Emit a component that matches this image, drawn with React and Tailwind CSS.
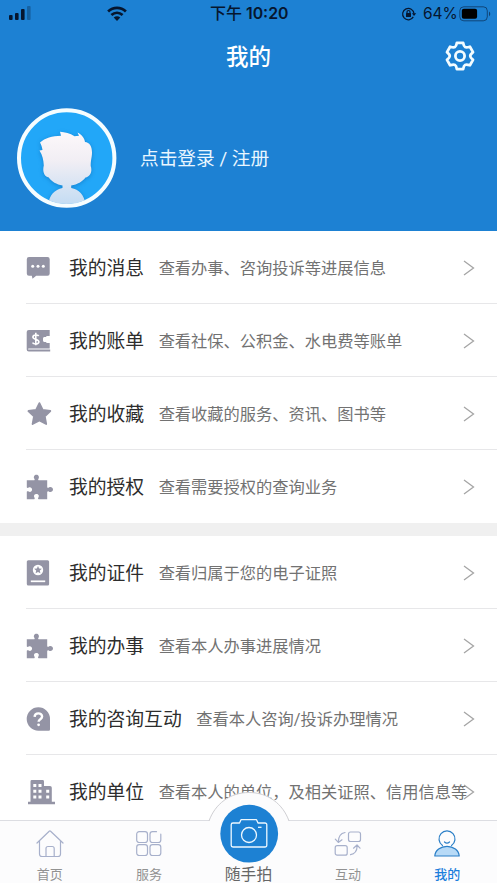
const serviceRows = [
  { icon: MessageIcon, title: '我的消息', desc: '查看办事、咨询投诉等进展信息' },
  { icon: BillIcon, title: '我的账单', desc: '查看社保、公积金、水电费等账单' },
  { icon: StarIcon, title: '我的收藏', desc: '查看收藏的服务、资讯、图书等' },
  { icon: PuzzleIcon, title: '我的授权', desc: '查看需要授权的查询业务' },
]

const personalRows = [
  { icon: CertificateIcon, title: '我的证件', desc: '查看归属于您的电子证照' },
  { icon: PuzzleIcon, title: '我的办事', desc: '查看本人办事进展情况' },
  { icon: QuestionIcon, title: '我的咨询互动', desc: '查看本人咨询/投诉办理情况' },
  { icon: BuildingIcon, title: '我的单位', desc: '查看本人的单位，及相关证照、信用信息等' },
]

function RowIcon({ children }) {
  return (
    <svg className="w-[30px] h-7 shrink-0 text-[#9494a5]" viewBox="0 0 30 28" fill="currentColor">
      {children}
    </svg>
  )
}

function MessageIcon() {
  return (
    <RowIcon>
      <path d="M3 4h18.500a2.200 2.200 0 0 1 2.200 2.200v14.300a2.200 2.200 0 0 1-2.200 2.200H10.200L6.500 25.800l-.7-3.100H3a2.200 2.200 0 0 1-2.200-2.200V6.200A2.200 2.200 0 0 1 3 4z" />
      <g fill="#fff">
        <circle cx="6.700" cy="13.300" r="1.500" />
        <circle cx="12" cy="13.300" r="1.500" />
        <circle cx="17.300" cy="13.300" r="1.500" />
      </g>
    </RowIcon>
  )
}

function BillIcon() {
  return (
    <RowIcon>
      <path d="M2.800 4h20.900v6h-2.500a2 2 0 0 0-1.300 1h-1.700a1.600 1.600 0 0 0-1.200 1.600v1.800a1.600 1.600 0 0 0 1.200 1.600h1.700a2 2 0 0 0 1.300 1h2.500v5.500H2.600a.5.5 0 0 0 0 1h21.600v2H2.800A2.100 2.100 0 0 1 .7 23.400V6.100A2.100 2.100 0 0 1 2.800 4z" />
      <path d="M12.700 10c-.8-1.300-5.700-1.800-5.800 1.100 0 3 6 1.700 6 4.700 0 2.800-5.200 2.700-6.400.8M9.800 6.800v12.500" fill="none" stroke="#fff" strokeWidth="1.600" />
    </RowIcon>
  )
}

function StarIcon() {
  return (
    <RowIcon>
      <path d="M13.400 4.100l3.300 6.800 7.600 1.100-5.500 5.300 1.400 7.700-6.800-3.600-6.800 3.600 1.400-7.700-5.600-5.300 7.700-1.100z" stroke="currentColor" strokeWidth="1.800" strokeLinejoin="round" />
    </RowIcon>
  )
}

function PuzzleIcon() {
  return (
    <RowIcon>
      <path d="M.8 8.300h7.600c.5-.5.300-1-.2-1.700-1-1.600.2-3.800 2.200-3.800s3.200 2.200 2.200 3.800c-.5.700-.6 1.200-.1 1.700h8.700v7c.4.7 1 .7 1.800.2 1.700-1.100 4 .1 4 2.100s-2.300 3.200-4 2.100c-.8-.5-1.400-.5-1.800.2v7.300h-8.700c-.7-.5-.6-.9-.1-1.700 1.100-1.700 0-3.400-2-3.400s-3.100 1.700-2 3.400c.5.800.4 1.300-.2 1.700H.8v-7.500c.5-.7 1.100-.6 1.900-.1 1.500.9 3.400-.2 3.400-2s-1.900-2.900-3.400-2c-.8.500-1.400.5-1.900-.1z" />
    </RowIcon>
  )
}

function CertificateIcon() {
  return (
    <RowIcon>
      <rect x=".8" y="2.200" width="22.300" height="25.400" rx="1.500" />
      <circle cx="12" cy="12" r="5.200" fill="#fff" />
      <path d="M12 7.900l1.100 2.500 2.800.3-2.100 1.900.6 2.700-2.400-1.400-2.400 1.400.6-2.700-2.100-1.900 2.800-.3z" />
      <path d="M4.800 23.300h14.400" stroke="#fff" strokeWidth="1.700" />
    </RowIcon>
  )
}

function QuestionIcon() {
  return (
    <RowIcon>
      <path d="M12.400 3.300a11.600 11.600 0 0 1 11.600 11.600V25.500a1.200 1.200 0 0 1-1.200 1.200H12.400a11.700 11.700 0 0 1 0-23.400z" />
      <path d="M8.600 12.900c.1-4.700 7.600-4.500 7.500-.4 0 2.800-3.500 2.500-3.500 5.300" fill="none" stroke="#fff" strokeWidth="2.400" />
      <circle cx="12.600" cy="20.800" r="1.400" fill="#fff" />
    </RowIcon>
  )
}

function BuildingIcon() {
  return (
    <RowIcon>
      <path d="M6 3h10.600a1.400 1.400 0 0 1 1.400 1.400V9h6a1.800 1.800 0 0 1 1.800 1.800v14H29v2.400H2v-2.400h2.500V4.400A1.400 1.400 0 0 1 6 3z" />
      <g fill="#fff">
        <path d="M7.300 7h3v3h-3zM12.500 7h3v3h-3zM7.300 12.700h3v3h-3zM12.500 12.700h3v3h-3zM7.300 18.500h3v3h-3zM12.500 18.500h3v3h-3zM20.200 12.700h3v3h-3zM20.200 18.500h3v3h-3z" />
      </g>
    </RowIcon>
  )
}

function Row({ icon: Icon, title, desc }) {
  return (
    <div className="ml-[26px] flex h-[73px] items-center whitespace-nowrap border-b border-[#e7e7e9] last:border-transparent">
      <Icon />
      <span className="ml-[13px] pt-[5px] text-[18.800px] text-[#2d2d2d]">{title}</span>
      <span className="ml-[14.500px] min-w-0 flex-1 pt-1 text-[16.250px] text-[#727272]">{desc}</span>
      <svg className="mr-[22px] mt-px h-5 w-3 shrink-0" viewBox="0 0 12 20" fill="none" stroke="#a5a5a5" strokeWidth="1.300">
        <path d="M1 3l9.500 7L1 17" />
      </svg>
    </div>
  )
}

function StatusBar() {
  return (
    <div className="flex h-7 items-center text-[#06162f]">
      <svg className="ml-2 h-4 w-6" viewBox="0 0 24 16" fill="currentColor">
        <rect x="1" y="9" width="3.600" height="5" rx="1" />
        <rect x="7" y="7" width="3.600" height="7" rx="1" />
        <rect x="13" y="3" width="3.600" height="11" rx="1" />
        <rect x="19" y="0" width="3.600" height="14" rx="1" opacity=".3" />
      </svg>
      <svg className="ml-[75px] h-4 w-5" viewBox="0 0 20 16" fill="none" stroke="currentColor" strokeWidth="2.700">
        <path d="M1.100 5.500c5.200-4.900 12.600-4.900 17.800 0M4.400 9.100c3.300-3 7.900-3 11.200 0" />
        <path d="M6.700 11.500c2-1.700 4.600-1.700 6.600 0L10 14.900z" fill="currentColor" stroke="none" />
      </svg>
      <span className="ml-[83px] w-[80px] whitespace-nowrap text-[16px] font-medium">
        下午<span className="font-['Inter'] text-[15.800px] font-semibold"> 10:20</span>
      </span>
      <svg className="ml-[111px] h-4 w-4" viewBox="0 0 16 16" fill="none" stroke="currentColor" strokeWidth="1.200">
        <path d="M12.300 10.900A5.700 5.700 0 1 1 13 7.600" />
        <path d="M10.900 7.300h4.300L13 9.900z" fill="currentColor" stroke="none" />
        <rect x="5" y="7" width="5" height="4" rx=".6" fill="currentColor" stroke="none" />
        <path d="M6 7.500V6c0-2 3-2 3 0v1.500" />
      </svg>
      <span className="ml-[6px] w-[36px] font-['Inter'] text-[15.500px]">64%</span>
      <svg className="h-4 w-8" viewBox="0 0 32 16">
        <rect x=".8" y=".8" width="27.500" height="14" rx="4" fill="none" stroke="currentColor" opacity=".55" />
        <rect x="2.800" y="2.800" width="15.300" height="10" rx="2" fill="#000" />
        <path d="M30 5.500v4.800c1.700-.8 1.700-4 0-4.800z" fill="currentColor" opacity=".6" />
      </svg>
    </div>
  )
}

function Avatar() {
  return (
    <svg className="ml-4 h-[102px] w-[102px]" viewBox="0 0 102 102">
      <defs>
        <linearGradient id="face" x1="0" y1="0" x2="0" y2="1">
          <stop offset="0" stopColor="#fdf8fa" />
          <stop offset=".4" stopColor="#f1eef4" />
          <stop offset="1" stopColor="#c3dcf3" />
        </linearGradient>
        <clipPath id="inner">
          <circle cx="50.700" cy="51" r="46" />
        </clipPath>
      </defs>
      <circle cx="50.700" cy="51" r="47.700" fill="#22a7f8" stroke="#f6fdff" strokeWidth="4" />
      <g clipPath="url(#inner)">
        <path
          className="drop-shadow-[0_1px_2px_rgba(0,70,140,0.35)]"
          fill="url(#face)"
          d="M24 35.500C29 31 36 29.200 45 28.800L44 24.800C49 25 54 26.500 58.500 29.200L63 28.700L61.500 25.500C65.500 27.500 68.500 31 69 35C73.500 35.500 76 39 76 45.500C76 50 74.700 53 74.700 59C76.500 64 74.500 69.500 69.500 70.500C66.500 74.500 61.500 77.500 55.200 78.500V81C63 82.500 68 87 69.800 98H32C33.500 88 38.500 82.500 46.500 81V78.500C40.500 77.500 35.500 74.500 32.800 70.500C28 69.500 26.300 64.500 27.800 58.500C27.500 53 26.500 48 23.500 43.500L26.500 43C26 40 25.300 37.800 24 35.500Z"
        />
      </g>
    </svg>
  )
}

function TabIcon({ children }) {
  return (
    <svg className="h-7 w-7 shrink-0" viewBox="0 0 28 28" fill="none" stroke="#a7b0cb" strokeWidth="1.200" strokeLinejoin="round" strokeLinecap="round">
      {children}
    </svg>
  )
}

function Tab({ label, active, children }) {
  return (
    <div className="flex flex-1 flex-col items-center pt-[9px]">
      <TabIcon>{children}</TabIcon>
      <span className={`mt-[7px] text-[13px] leading-5 ${active ? 'font-medium text-[#1d7fdc]' : 'text-[#929292]'}`}>{label}</span>
    </div>
  )
}

function TabBar() {
  return (
    <nav className="relative flex h-[63px] shrink-0 border-t border-[#dcdde2] bg-[#fcfcfd]">
      <Tab label="首页">
        <path d="M1 13L13.200 1.200a1 1 0 0 1 1.400 0L27 13M3.500 11v13a2.500 2.500 0 0 0 2.500 2.500h16a2.500 2.500 0 0 0 2.500-2.500V11" />
        <path d="M10 26.500v-8a2 2 0 0 1 2-2h4.200a2 2 0 0 1 2 2v8" />
      </Tab>
      <Tab label="服务">
        <rect x="1.700" y="1.700" width="10.800" height="10.800" rx="2.500" />
        <path d="M21.500 1.700h-4a2.500 2.500 0 0 0-2.500 2.500V10a2.500 2.500 0 0 0 2.500 2.500h5.800a2.500 2.500 0 0 0 2.500-2.500V4.200" />
        <rect x="1.700" y="14.700" width="10.800" height="10.800" rx="2.500" />
        <rect x="15" y="14.700" width="10.800" height="10.800" rx="2.500" />
      </Tab>
      <div className="flex flex-1 flex-col items-center">
        {/* Raised camera button */}
        <svg className="absolute left-1/2 top-[-31px] h-[76px] w-[88px] -translate-x-1/2" viewBox="0 0 88 76" fill="none">
          <path d="M4 31C10 14 25 2.500 44 2.500S78 14 84 31v20H4z" fill="#fcfcfd" />
          <path d="M4 31C10 14 25 2.500 44 2.500S78 14 84 31" stroke="#cfcfd3" />
          <circle cx="44.200" cy="43.700" r="28.900" fill="#1d81d3" />
          <g stroke="#edf8ff" strokeWidth="1.300" strokeLinejoin="round">
            <path d="M28 33h6.500l1.500-3.300h15.500L53 33h7a1.800 1.800 0 0 1 1.800 1.800v20.400A1.800 1.800 0 0 1 60 57H28a1.800 1.800 0 0 1-1.800-1.800V34.800A1.800 1.800 0 0 1 28 33z" />
            <circle cx="44" cy="45" r="7.500" />
            <path d="M53 37.300h3.500" />
          </g>
        </svg>
        <span className="relative mt-11 text-[15.800px] leading-5 text-[#666]">随手拍</span>
      </div>
      <Tab label="互动">
        <rect x="14.500" y="2" width="12" height="9.500" rx="2" />
        <rect x="1.200" y="15.700" width="12" height="9.500" rx="2" />
        <path d="M11 2.500C7 3.200 4.400 6.500 4.300 12M1.300 9.200l3 3.200 3.700-2.600M16.500 24.700c4.600-.7 6.500-4.500 6.700-9M19.500 18.200l3.500-3.200 3 3.200" />
      </Tab>
      <Tab label="我的" active>
        <g stroke="#2b7fc7">
          <path d="M9.500 15.500a8 8 0 1 1 9 0M11.500 12c1.500 1.300 3.500 1.300 5 0" />
          <path d="M1.800 26c.3-5.700 5.800-9.700 12.200-9.700S25.900 20.300 26.200 26z" fill="#b7daf7" />
        </g>
      </Tab>
    </nav>
  )
}

export default function App() {
  return (
    <div className="flex h-screen w-full flex-col overflow-hidden bg-white font-['Roboto','Noto_Sans_CJK_SC',sans-serif]">
      <header className="h-[231px] shrink-0 bg-[#1d81d3]">
        <StatusBar />
        <div className="flex h-14 items-center">
          <h1 className="ml-[226px] flex-1 pt-[3px] text-[22.500px] font-medium text-white">我的</h1>
          <svg className="mr-[21px] h-8 w-8" viewBox="0 0 32 32" fill="none" stroke="#f3fcff" strokeWidth="2.800" strokeLinejoin="round">
            <path d="M12.900 2.800H19.100C20 7.600 21.300 8.300 25.900 6.700L29 12.100C25.300 15.300 25.300 16.700 29 19.900L25.900 25.300C21.300 23.700 20 24.400 19.100 29.200H12.900C12 24.400 10.700 23.700 6.100 25.300L3 19.900C6.700 16.700 6.700 15.300 3 12.100L6.100 6.700C10.700 8.300 12 7.600 12.900 2.800Z" />
            <circle cx="16" cy="16" r="4.600" />
          </svg>
        </div>
        <div className="mt-[23px] flex items-center">
          <Avatar />
          <span className="ml-[22px] pt-[3px] text-[18.700px] text-[#e9f6ff]">点击登录 / 注册</span>
        </div>
      </header>

      <main className="min-h-0 flex-1 overflow-hidden">
        <section>
          {serviceRows.map((row) => (
            <Row key={row.title} {...row} />
          ))}
        </section>
        <div className="h-[13px] bg-[#f0f0f0]" />
        <section>
          {personalRows.map((row) => (
            <Row key={row.title} {...row} />
          ))}
        </section>
      </main>

      <TabBar />
    </div>
  )
}
